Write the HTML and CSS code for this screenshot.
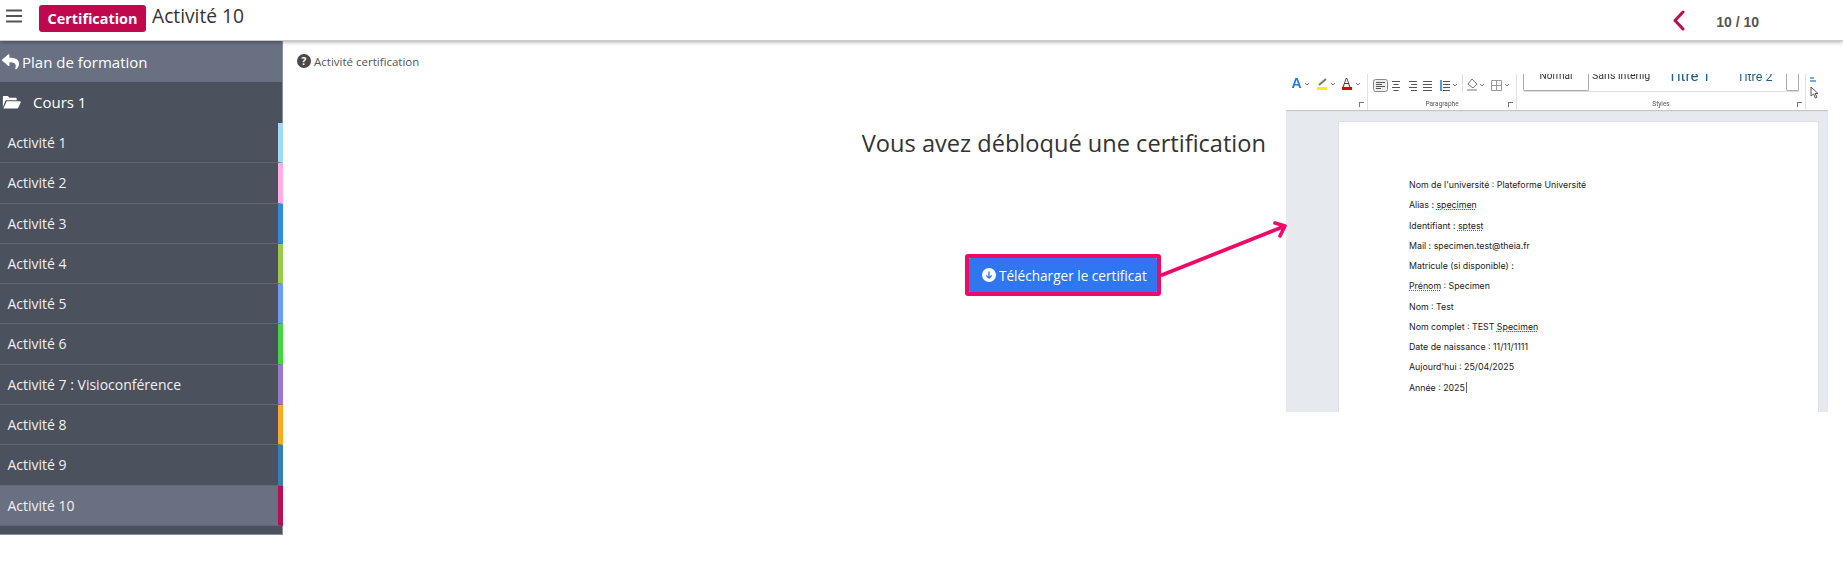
FILE: index.html
```html
<!DOCTYPE html>
<html lang="fr">
<head>
<meta charset="utf-8">
<title>Activité 10</title>
<link rel="stylesheet" href="styles.css">
</head>
<body>
<header class="topbar">
  <svg class="burger" viewBox="0 0 16 14" width="16" height="14"><path d="M0 1.500h16M0 7h16M0 12.500h16" stroke="#555" stroke-width="2"/></svg>
  <span class="badge">Certification</span>
  <h1 class="page-title">Activité 10</h1>
  <div class="pager">
    <svg class="chevron" viewBox="0 0 13 21" width="13" height="21"><path d="M11 2 3 10.500 11 19" fill="none" stroke="#c0084f" stroke-width="3" stroke-linecap="round" stroke-linejoin="round"/></svg>
    <span class="count">10 / 10</span>
  </div>
</header>
<div class="shell">
  <nav class="sidebar">
    <a class="plan"><svg viewBox="0 0 512 512" width="17" height="17"><path fill="#fff" d="M8 197 184 45c15-13 40-3 40 18v80c161 2 288 34 288 188 0 62-40 124-84 156-14 10-33-3-28-19 46-146-21-185-176-187v88c0 21-25 31-40 18L8 235c-11-10-11-28 0-38z"/></svg>Plan de formation</a>
    <div class="course"><svg viewBox="0 0 22 16" width="19" height="14"><path fill="#fff" d="M1 14V2.200C1 1.500 1.500 1 2.200 1h4.600l1.700 2h7.300c.7 0 1.200.5 1.200 1.200V6H5.500C4.500 6 3.900 6.500 3.500 7.300z"/><path fill="#fff" d="M5.400 7.200h15.300c.8 0 1.200.7.900 1.400l-2.800 6c-.3.600-.7.900-1.400.9H1.600z"/></svg><span>Cours 1</span></div>
    <ul class="items">
      <li class="item c1">Activité 1</li>
      <li class="item c2">Activité 2</li>
      <li class="item c3">Activité 3</li>
      <li class="item c4">Activité 4</li>
      <li class="item c5">Activité 5</li>
      <li class="item c6">Activité 6</li>
      <li class="item c7">Activité 7 : Visioconférence</li>
      <li class="item c8">Activité 8</li>
      <li class="item c9">Activité 9</li>
      <li class="item c10 active">Activité 10</li>
    </ul>
  </nav>
  <main class="content">
    <p class="hint"><svg viewBox="0 0 14 14" width="14" height="14"><circle cx="7" cy="7" r="7" fill="#4a4a4a"/><text x="7" y="10.600" text-anchor="middle" class="hint-q">?</text></svg>Activité certification</p>
    <div class="stage">
      <section class="cta">
        <h2 class="unlock">Vous avez débloqué une certification</h2>
        <div class="btn-frame">
          <button class="btn"><svg viewBox="0 0 14 14" width="14" height="14"><circle cx="7" cy="7" r="7" fill="#fff"/><path d="M7 3.500v6.500M4.300 7.500 7 10.200l2.700-2.700" fill="none" stroke="#2f76f0" stroke-width="1.300"/></svg>Télécharger le certificat</button>
        </div>
      </section>
      <figure class="shot">
        <div class="ribbon">
          <div class="group g-font">
            <div class="tools">
              <svg viewBox="0 0 82 25" width="82" height="25">
                <text x="5.500" y="14" class="wa">A</text><path d="M19 9l2 2 2-2" class="caret"/>
                <path d="M33 11 40 5" stroke="#777" stroke-width="2"/><rect x="31" y="13" width="10" height="3" fill="#ffee00"/><path d="M45 9l2 2 2-2" class="caret"/>
                <text x="56.500" y="12.500" class="fa">A</text><rect x="56" y="13" width="10" height="3" fill="#e00000"/><path d="M70 9l2 2 2-2" class="caret"/>
              </svg>
            </div>
            <div class="grp-label"><i class="launch"></i></div>
          </div>
          <div class="group g-para">
            <div class="tools">
              <svg viewBox="0 0 149 25" width="149" height="25">
                <rect x="5.500" y="5.500" width="14" height="12" rx="2" fill="#eee" stroke="#888"/>
                <path d="M8 8.500h9M8 10.500h6M8 12.500h9M8 14.500h5" class="ln"/>
                <path d="M24 7.500h8M25.500 10.500h5M24 13.500h8M25.500 16.500h5M41 7.500h8M43 10.500h6M41 13.500h8M43 16.500h6M55 7.500h9M55 10.500h9M55 13.500h9M55 16.500h9" class="ln"/>
                <path d="M75 7.500h7M75 10.500h7M75 13.500h7M75 16.500h7" class="ln"/><path d="M73 6v11" stroke="#1a78d0" stroke-width="1.500"/>
                <path d="M85 10l2 2 2-2" class="caret"/>
                <path d="M94.500 0v18" stroke="#ddd"/>
                <path d="M104 5l5 5-4 4-5-4z" fill="#fff" stroke="#777"/><rect x="99" y="15" width="10" height="2" fill="#bbb"/>
                <path d="M112 10l2 2 2-2" class="caret"/>
                <path d="M123.500 6.500h10v10h-10zM128.500 6.500v10M123.500 11.500h10" fill="none" stroke="#999"/>
                <path d="M137 10l2 2 2-2" class="caret"/>
              </svg>
            </div>
            <div class="grp-label">Paragraphe<i class="launch"></i></div>
          </div>
          <div class="group g-style">
            <div class="tools">
              <div class="gallery">
                <span class="st st-n">Normal</span>
                <span class="st st-s">Sans interligne</span>
                <span class="st st-1">Titre 1</span>
                <span class="st st-2">Titre 2</span>
                <span class="scroller"></span>
              </div>
            </div>
            <div class="grp-label">Styles<i class="launch"></i></div>
          </div>
          <div class="group g-end">
            <svg viewBox="0 0 16 28" width="16" height="28"><path d="M4 4h4M4 7h6" stroke="#4a8fd0" stroke-width="1.500"/><path d="M5 13v9l2.500-2 2 4 1.500-1-2-3.500h3z" fill="#fff" stroke="#555"/></svg>
          </div>
        </div>
        <div class="doc-area">
          <div class="page">
            <p>Nom de l'université : Plateforme Université</p>
            <p>Alias : <u>specimen</u></p>
            <p>Identifiant : <u>sptest</u></p>
            <p>Mail : specimen.test@theia.fr</p>
            <p>Matricule (si disponible) :</p>
            <p><u>Prénom</u> : Specimen</p>
            <p>Nom : Test</p>
            <p>Nom complet : TEST <u>Specimen</u></p>
            <p>Date de naissance : 11/11/1111</p>
            <p>Aujourd'hui : 25/04/2025</p>
            <p><span class="typing">Année : 2025</span></p>
          </div>
        </div>
      </figure>
      <svg class="arrow" viewBox="0 0 130 65" width="130" height="65"><path d="M2 60 125 11M115 8 125 11 120 21" fill="none" stroke="#ee0a66" stroke-width="3.600" stroke-linecap="round" stroke-linejoin="round"/></svg>
    </div>
  </main>
</div>
</body>
</html>
```
FILE: styles.css
```css
* { box-sizing: border-box; }
html, body { margin: 0; padding: 0; }
body { width: 1843px; height: 576px; overflow: hidden; background: #fff; font-family: "Open Sans", sans-serif; color: #333; }

.topbar { height: 41px; display: flex; align-items: flex-start; box-shadow: 0 1px 4px rgba(0,0,0,.35); position: relative; z-index: 2; background: #fff; border-bottom: 1px solid #ccc; }
.burger { margin: 9px 0 0 6px; flex: none; }
.badge { margin: 5px 0 0 17px; width: 107px; height: 27px; background: #c0084f; color: #fff; border-radius: 3px; font-weight: 700; font-size: 14.400px; line-height: 27px; text-align: center; }
.page-title { margin: 0 0 0 6px; font-weight: 400; font-size: 19.200px; line-height: 32px; color: #333; }
.pager { margin-left: auto; display: flex; align-items: flex-start; padding-right: 84px; }
.chevron { margin-top: 10px; }
.count { margin: 13px 0 0 31px; font-family: "Liberation Sans", sans-serif; font-weight: 700; font-size: 14px; line-height: 18px; color: #555; }

.shell { display: flex; align-items: flex-start; }
.sidebar { width: 283px; height: 494px; flex: none; background: #4b515d; color: #fff; border-right: 1px solid #8a8f99; border-bottom: 1px solid #8a8f99; }
.plan { height: 41px; display: flex; align-items: center; gap: 3px; padding-left: 2px; background: #687082; font-size: 15px; }
.course { height: 41px; display: flex; align-items: center; gap: 12px; padding: 0 0 2px 2px; font-size: 15px; }
.items { list-style: none; margin: 0 -1px 0 0; padding: 0; }
.item { height: 40.300px; line-height: 40px; padding-left: 7.500px; font-size: 14px; color: #f0f0f0; border-right: 5px solid; border-bottom: 1px solid #63676f; }
.item.active { background: #687082; }
.c1 { border-right-color: #9fd8fb; }
.c2 { border-right-color: #fbaee8; }
.c3 { border-right-color: #2f8ae0; }
.c4 { border-right-color: #97cc48; }
.c5 { border-right-color: #6d9cec; }
.c6 { border-right-color: #44d43c; }
.c7 { border-right-color: #9a78cc; }
.c8 { border-right-color: #fbaa24; }
.c9 { border-right-color: #3a7cb4; }
.c10 { border-right-color: #b80f52; }

.content { flex: 1; padding: 10px 0 0 14px; min-width: 0; }
.hint { margin: 0; height: 20px; display: flex; align-items: center; gap: 3px; font-size: 11.500px; color: #555; }
.hint-q { fill: #fff; font: 700 10px "Open Sans", sans-serif; }
.stage { position: relative; display: flex; align-items: flex-start; margin-top: 3px; }
.cta { width: 989px; flex: none; display: flex; flex-direction: column; align-items: flex-end; padding-right: 20px; padding-top: 52px; }
.unlock { margin: 0; font-weight: 400; font-size: 23.600px; line-height: 34px; color: #333; white-space: nowrap; }
.btn-frame { margin: 94px 105px 0 0; border: 4px solid #ee0a66; border-radius: 3px; background: #fff; position: relative; z-index: 1; }
.btn { display: flex; align-items: center; gap: 3px; width: 188px; height: 34px; padding: 0 0 0 13px; border: 0; border-radius: 1px; background: #2f76f0; color: #fff; font: 400 13.600px "Open Sans", sans-serif; white-space: nowrap; }

.shot { margin: 0; width: 542px; height: 338px; flex: none; display: flex; flex-direction: column; overflow: hidden; filter: blur(.35px); }
.ribbon { height: 36px; display: flex; flex: none; background: #fff; box-shadow: 0 1px 1px rgba(0,0,0,.15); position: relative; z-index: 1; }
.group { display: flex; flex-direction: column; height: 36px; flex: none; border-right: 1px solid #e2e2e2; }
.g-font { width: 82px; }
.g-para { width: 149px; }
.g-style { width: 289px; }
.g-end { width: 22px; border: 0; }
.tools { height: 25px; overflow: hidden; }
.grp-label { position: relative; height: 11px; font-family: "Roboto", sans-serif; font-size: 6.500px; line-height: 11px; color: #555; text-align: center; }
.launch { position: absolute; right: 3px; bottom: 3px; width: 5px; height: 5px; border-left: 1px solid #777; border-top: 1px solid #777; }
.wa { font: 700 14px "Liberation Sans", sans-serif; fill: #2a7bc8; }
.fa { font: 400 12px "Liberation Sans", sans-serif; fill: #444; }
.caret { fill: none; stroke: #777; }
.ln { stroke: #555; fill: none; }
.gallery { height: 18px; width: 276px; margin-left: 6px; display: flex; align-items: flex-end; border-bottom: 1px solid #ddd; position: relative; }
.st { display: block; height: 18px; font-family: "Roboto", sans-serif; white-space: nowrap; overflow: hidden; flex: none; }
.st-n { width: 66px; font-size: 10px; line-height: 6px; text-align: center; color: #333; border: 1px solid #aaa; border-top: 0; border-radius: 0 0 2px 2px; }
.st-s { width: 59px; margin-left: 3px; font-size: 10.600px; line-height: 6px; color: #333; }
.st-1 { width: 69px; margin-left: 17px; font-size: 15px; line-height: 7px; color: #1f5f8b; }
.st-2 { width: 49px; font-size: 12.500px; line-height: 7px; color: #1f5f8b; }
.scroller { width: 13px; height: 20px; border: 1px solid #aaa; border-top: 0; border-radius: 0 0 2px 2px; margin-left: auto; }
.doc-area { flex: 1; background: #e6eaef; padding: 11px 9px 0 52px; overflow: hidden; }
.page { height: 320px; background: #fff; border: 1px solid #dde1e6; padding: 56px 0 0 70px; font-family: "Inter", sans-serif; font-size: 8.800px; color: #222; }
.page p { margin: 0; height: 20.250px; line-height: 14px; white-space: nowrap; }
.page u { text-decoration: underline dotted #d33; text-decoration-thickness: 1px; text-underline-offset: 1px; }
.typing { border-right: 1px solid #666; padding-right: 1px; }
.arrow { position: absolute; left: 863px; top: 141px; z-index: 1; }
```
